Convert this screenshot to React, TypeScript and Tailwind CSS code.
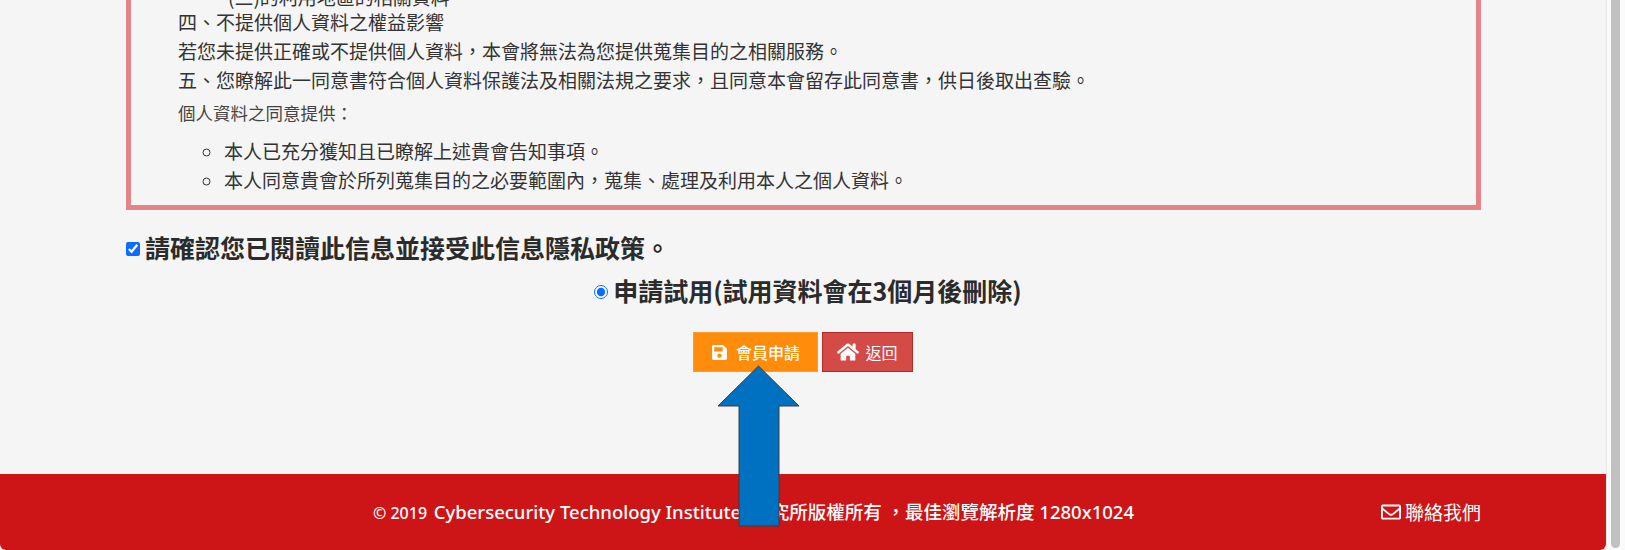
import { FaHome, FaRegEnvelope, FaSave } from "react-icons/fa";

const cjk = "font-['Noto_Sans_CJK_TC','Noto_Sans',sans-serif]";

const notice = [
  "四、不提供個人資料之權益影響",
  "若您未提供正確或不提供個人資料，本會將無法為您提供蒐集目的之相關服務。",
  "五、您瞭解此一同意書符合個人資料保護法及相關法規之要求，且同意本會留存此同意書，供日後取出查驗。",
];

const consent = [
  "本人已充分獲知且已瞭解上述貴會告知事項。",
  "本人同意貴會於所列蒐集目的之必要範圍內，蒐集、處理及利用本人之個人資料。",
];

const Arrow = () => (
  <svg className="absolute left-[717px] top-[365px]" width="84" height="163" viewBox="0 0 84 163">
    <path d="M41.5 1 L82 41 L62 41 L62 161 L22 161 L22 41 L1 41 Z" fill="#0070c0" stroke="#3d3d3d" strokeWidth="1" />
  </svg>
);

export default function App() {
  return (
    <div className={`${cjk} relative flex h-[550px] w-[1625px] overflow-hidden bg-[#fafafa] text-[#333]`}>
      <div className="flex w-[1606px] flex-col bg-[#f5f5f5]">
        <div className="flex-1 px-[126px]">
          <div className="-mt-[13px] h-[223px] w-[1355px] border-[5px] border-t-0 border-[#e38488] pl-[47px] text-[19px] leading-[29px]">
            <p className="pl-[50px] leading-[20px]">(三)的利用地區的相關資料</p>
            <p>{notice[0]}</p>
            <p>{notice[1]}</p>
            <p>{notice[2]}</p>
            <p className="mt-[4px] text-[17.5px] text-[#444]">個人資料之同意提供：</p>
            <ul className="mt-[9px] list-[circle] pl-[46px]">
              {consent.map((item) => (
                <li key={item}>{item}</li>
              ))}
            </ul>
          </div>
          <label className="mt-[21px] flex items-center gap-[5px] text-[25px] leading-[32px] font-bold text-[#2b2b2b]">
            <input type="checkbox" defaultChecked className="mt-[4px] h-[14px] w-[14px] accent-[#0b6cff]" />
            請確認您已閱讀此信息並接受此信息隱私政策。
          </label>
          <label className="mt-[11px] flex items-center justify-center gap-[5px] pl-[10px] text-[25px] leading-[32px] font-bold text-[#2b2b2b]">
            <input type="radio" defaultChecked className="mt-[4px] h-[14px] w-[14px] accent-[#0b6cff]" />
            申請試用(試用資料會在3個月後刪除)
          </label>
          <div className="mt-[26px] flex justify-center gap-[4px] text-[16px] text-white">
            <button className="flex h-[40px] w-[125px] items-center justify-center gap-[8px] border border-[#ff9a2e] bg-[#ff8c0a] font-medium">
              <FaSave size={17} />
              會員申請
            </button>
            <button className="flex h-[40px] w-[91px] items-center justify-center gap-[6px] border border-[#b52b27] bg-[#d34a47]">
              <FaHome size={22} />
              返回
            </button>
          </div>
        </div>
        <footer className="flex h-[76px] items-center justify-between rounded-b-[6px] bg-[#cd1517] pr-[125px] pl-[373px] text-white">
          <span className="font-['Noto_Sans','Noto_Sans_CJK_TC',sans-serif] text-[18.5px] font-medium">
            <span className="mr-[-3px] text-[16px]">© 2019</span>&nbsp; Cybersecurity Technology Institute
            <span className="ml-[11px]">研究所版權所有 ，最佳瀏覽解析度 1280x1024</span>
          </span>
          <span className="flex items-center gap-[4px] text-[19px]">
            <FaRegEnvelope size={20} />
            聯絡我們
          </span>
        </footer>
      </div>
      <div className="flex flex-1 border-l border-[#e8e8e8] pl-[4px]">
        <div className="h-[548px] w-[9px] rounded-b-full bg-[#c1c1c1]" />
      </div>
      <Arrow />
    </div>
  );
}
